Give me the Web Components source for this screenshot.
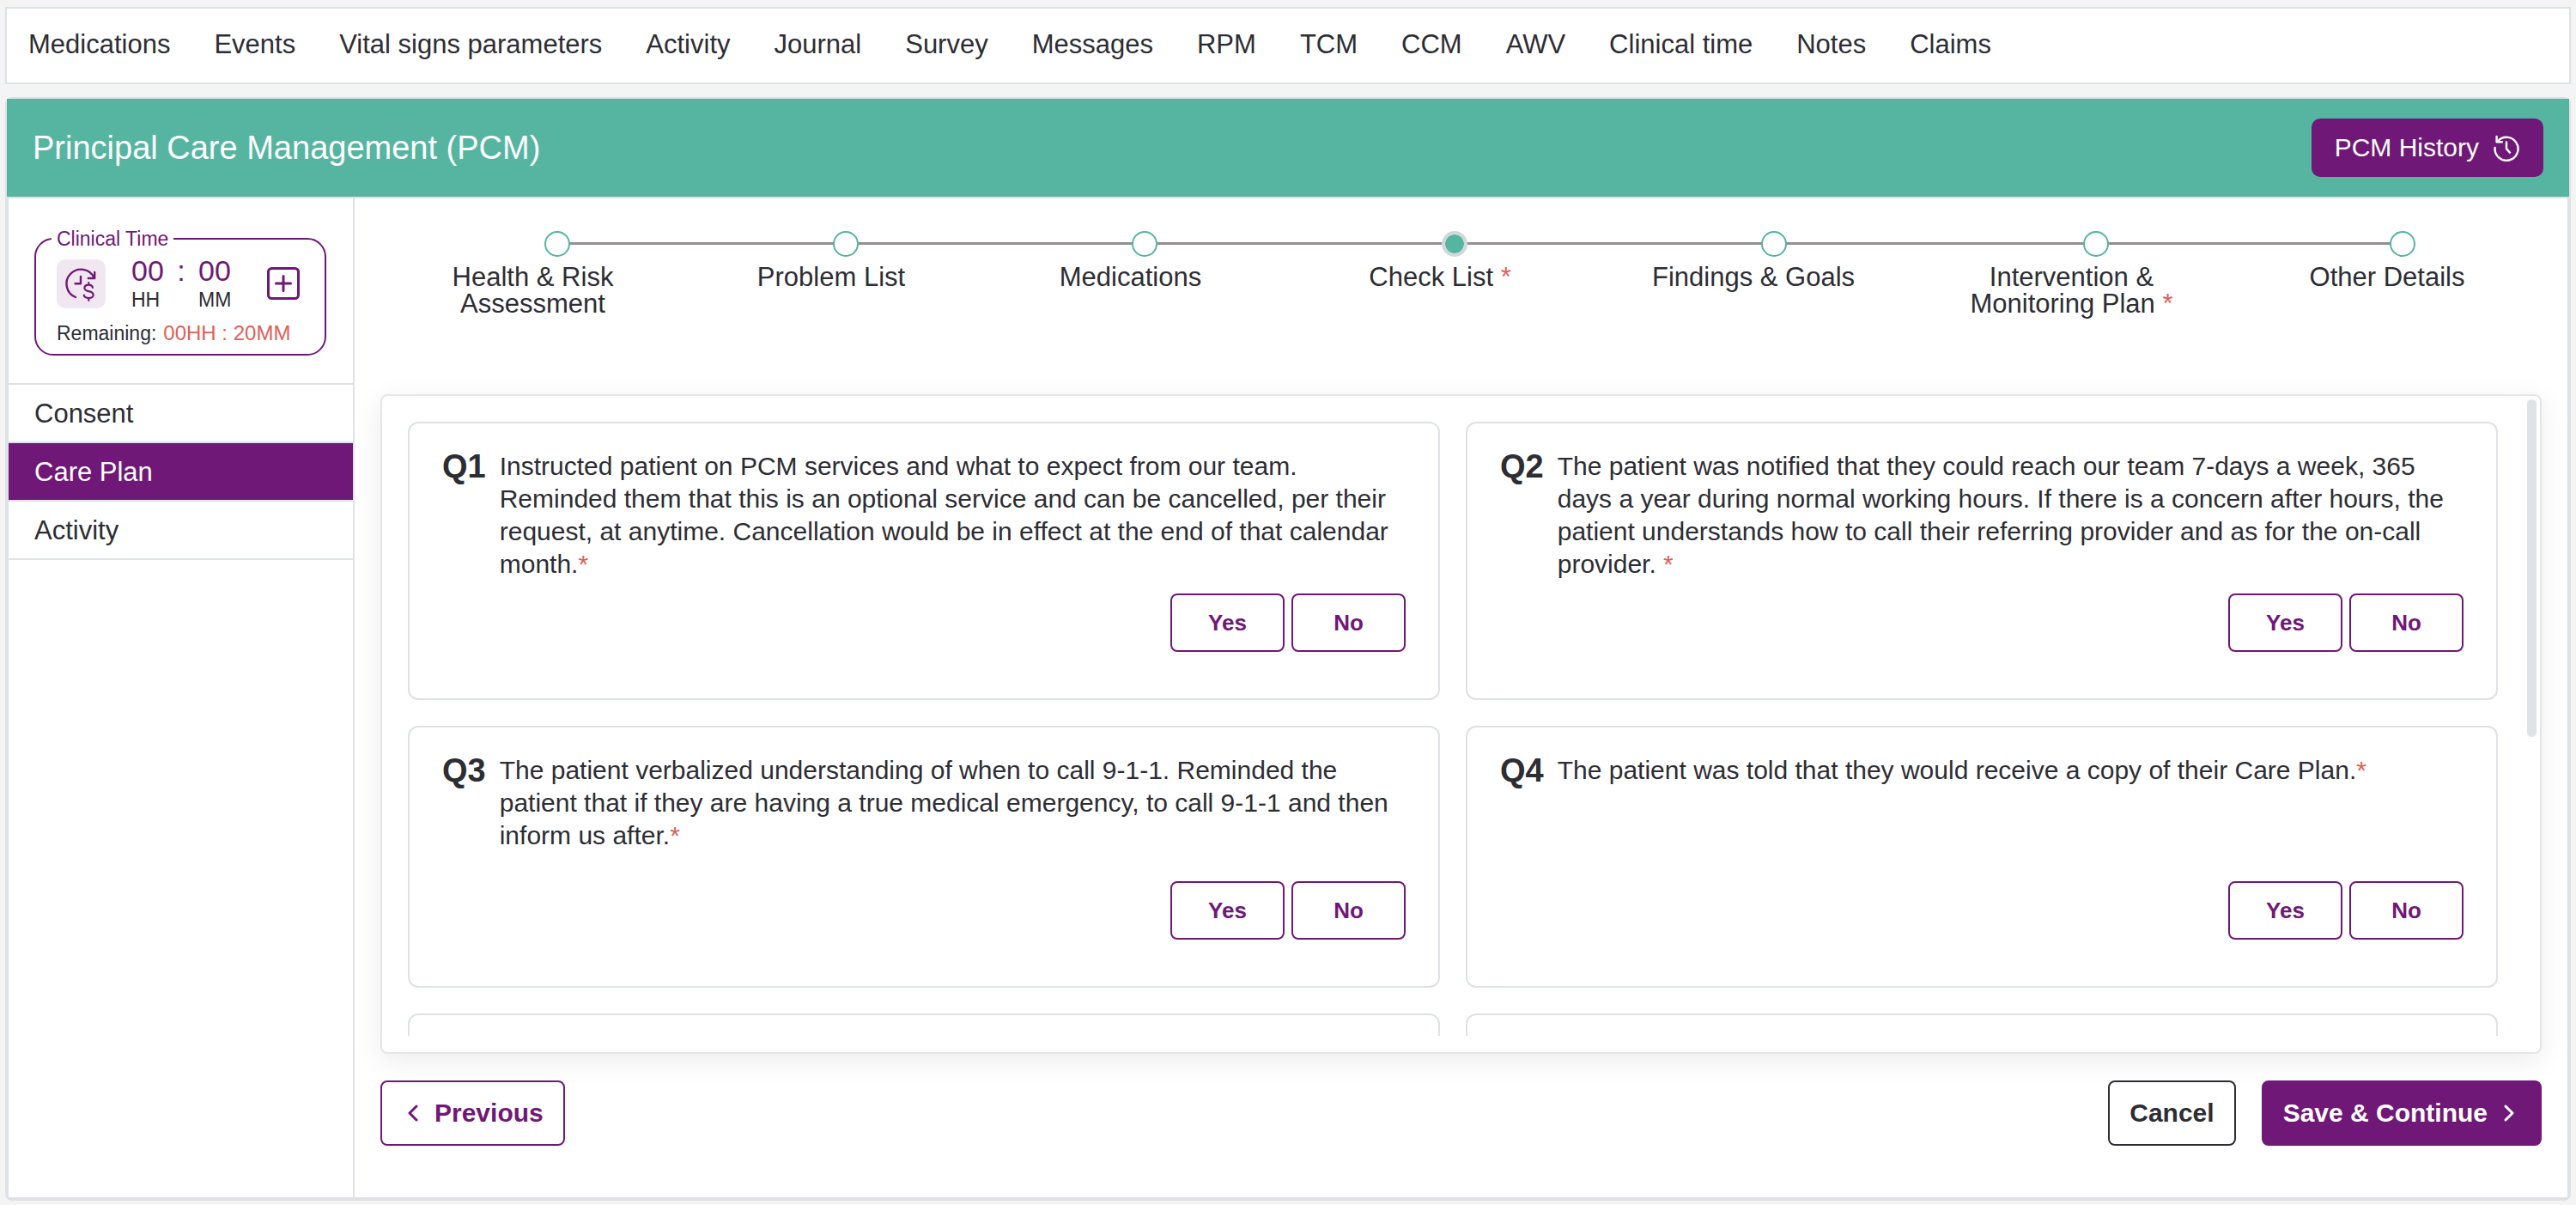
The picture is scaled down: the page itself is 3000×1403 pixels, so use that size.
<!DOCTYPE html>
<html lang="en">
<head>
<meta charset="utf-8">
<title>Principal Care Management (PCM)</title>
<style>
  :root {
    --purple: #6f1877;
    --teal: #55b5a1;
    --ink: #2d2d34;
    --line: #dee2e6;
    --red: #de6158;
  }

  body {
    margin: 0;
    background: #f4f4f4;
    color: var(--ink);
    font-family: "Liberation Sans", Arial, Helvetica, sans-serif;
    font-size: 31px;
  }
</style>
</head>
<body>
<pcm-page></pcm-page>

<script>
const define = (name, html, setup) => {
  const templateElement = document.createElement("template");
  templateElement.innerHTML = html;

  customElements.define(name, class extends HTMLElement {
    constructor() {
      super();
      this.attachShadow({ mode: "open" });
      this.shadowRoot.appendChild(templateElement.content.cloneNode(true));
    }

    connectedCallback() {
      if (setup) setup(this, this.shadowRoot);
    }
  });
};

/* nav-tabs: the bar with the patient sections */
define("nav-tabs", `
<style>
  :host { display: block; }
  nav {
    display: flex;
    flex-wrap: wrap;
    gap: 8px 51px;
    padding: 24px 25px 26px;
    background: #fff;
    border: 2px solid var(--line);
  }
  a { color: inherit; text-decoration: none; line-height: 36px; }
</style>
<nav aria-label="Patient sections">
  <a href="#">Medications</a>
  <a href="#">Events</a>
  <a href="#">Vital signs parameters</a>
  <a href="#">Activity</a>
  <a href="#">Journal</a>
  <a href="#">Survey</a>
  <a href="#">Messages</a>
  <a href="#">RPM</a>
  <a href="#">TCM</a>
  <a href="#">CCM</a>
  <a href="#">AWV</a>
  <a href="#">Clinical time</a>
  <a href="#">Notes</a>
  <a href="#">Claims</a>
</nav>
`);

/* page-header: green title bar, the slot holds the title */
define("page-header", `
<style>
  :host {
    display: flex;
    align-items: center;
    justify-content: space-between;
    padding: 23px 30px;
    background: var(--teal);
    color: #fff;
  }
  h1 { margin: 0; font-size: 38px; font-weight: 400; line-height: 44px; }
  button {
    display: flex;
    align-items: center;
    gap: 16px;
    height: 68px;
    padding: 0 27px;
    border: 0;
    border-radius: 10px;
    background: var(--purple);
    color: #fff;
    font: inherit;
    font-size: 30px;
  }
  svg { display: block; width: 32px; height: 32px; }
</style>
<h1><slot></slot></h1>
<button type="button">
  PCM History
  <svg viewBox="0 0 32 32" fill="none" stroke="#fff" stroke-width="2.4" stroke-linecap="round" stroke-linejoin="round" aria-hidden="true">
    <path d="M2.6 16A13.5 13.5 0 1 0 6 8.3"/>
    <path d="M4.6 3v6.2h6.2"/>
    <path d="M16 9.5v7.6l4 4.6"/>
  </svg>
</button>
`);

/* clinical-time: logged time box in the side bar */
define("clinical-time", `
<style>
  :host { display: block; font-size: 23px; line-height: 26px; }
  fieldset {
    min-width: 0;
    margin: 0;
    padding: 6px 18px 10px;
    border: 2px solid var(--purple);
    border-radius: 22px;
  }
  legend { padding: 0 6px; color: var(--purple); line-height: 28px; }
  .row { display: flex; align-items: center; padding: 0 11px 0 6px; }
  .badge { width: 57px; height: 57px; border-radius: 10px; background: #f1e7f1; }
  .time {
    display: grid;
    grid-template-columns: 38px 40px 38px;
    row-gap: 4px;
    margin: 0 auto 0 30px;
  }
  .num { color: var(--purple); font-size: 34px; line-height: 34px; }
  .colon { text-align: center; }
  button { padding: 0; border: 0; background: none; }
  svg { display: block; }
  .left { display: flex; align-items: baseline; gap: 8px; margin-top: 12px; padding-left: 6px; line-height: 28px; }
  .left strong { color: var(--red); font-size: 24px; font-weight: 400; }
</style>
<fieldset>
  <legend>Clinical Time</legend>
  <div class="row">
    <svg class="badge" viewBox="0 0 57 57" fill="none" stroke="var(--purple)" stroke-width="2.4" stroke-linecap="round" stroke-linejoin="round" aria-hidden="true">
      <path d="M22 44A16.8 16.8 0 1 1 43.6 21.5"/>
      <path d="M44.2 15v7h-7.4"/>
      <path d="M28 20v8.2h-6.4"/>
      <path stroke-width="2.1" d="M42 33c-.4-2.2-2.2-3.4-4.7-3.4-2.9 0-4.9 1.4-4.9 3.6 0 2.6 2.1 3.3 4.9 3.9 3.3.7 5.4 1.6 5.4 4.2 0 2.4-2.3 3.7-5.4 3.7-3 0-5.1-1.2-5.6-3.5M37.3 27v2.5M37.3 45v3"/>
    </svg>
    <div class="time">
      <span class="num">00</span><span class="num colon">:</span><span class="num">00</span>
      <span>HH</span><span></span><span>MM</span>
    </div>
    <button type="button" aria-label="Add time">
      <svg width="38" height="38" viewBox="0 0 38 38" fill="none" stroke="var(--purple)" stroke-width="3" stroke-linecap="round" aria-hidden="true">
        <rect x="1.5" y="1.5" width="35" height="35" rx="4"/>
        <path d="M19 10.5v17M10.5 19h17"/>
      </svg>
    </button>
  </div>
  <div class="left"><span>Remaining:</span><strong>00HH : 20MM</strong></div>
</fieldset>
`);

/* side-bar: clinical time and the section menu */
define("side-bar", `
<style>
  :host { display: block; box-sizing: border-box; border-right: 2px solid var(--line); }
  .top { padding: 33px 31px 32px 30px; }
  nav { display: flex; flex-direction: column; border-top: 2px solid var(--line); }
  a {
    padding: 16px 30px 14px;
    border-bottom: 2px solid var(--line);
    color: inherit;
    line-height: 36px;
    text-decoration: none;
  }
  a[aria-current] { background: var(--purple); color: #fff; }
</style>
<div class="top"><clinical-time></clinical-time></div>
<nav aria-label="PCM sections">
  <a href="#">Consent</a>
  <a href="#" aria-current="page">Care Plan</a>
  <a href="#">Activity</a>
</nav>
`);

/*
step-item

atributos:
- active: paso actual
- required: muestra el asterisco
*/
define("step-item", `
<style>
  :host { display: flex; justify-content: center; }
  .dot {
    box-sizing: border-box;
    width: 30px;
    height: 30px;
    margin-left: calc(60% - 15px);
    border: 2px solid var(--teal);
    border-radius: 50%;
    background: #fff;
  }
  :host([active]) .dot { border: 4px solid #d1d8d9; background: var(--teal); background-clip: padding-box; }
  .label { max-width: 280px; margin-top: 8px; line-height: 31px; text-align: center; }
  .star { color: var(--red); }
  :host(:not([required])) .star { display: none; }
</style>
<div>
  <div class="dot"></div>
  <div class="label"><slot></slot><span class="star"> *</span></div>
</div>
`);

/* step-bar: the steps lie over one track line, in the same grid cell */
define("step-bar", `
<style>
  :host { display: grid; align-items: start; }
  .track, .steps { grid-area: 1 / 1; }
  .track {
    height: 3px;
    margin: 13px 161px 0 206px;
    background: #929090;
  }
  .steps {
    display: grid;
    grid-template-columns: 355fr 340fr 357fr 364fr 366fr 375fr 360fr;
  }
</style>
<div class="track"></div>
<div class="steps"><slot></slot></div>
`);

define("outline-card", `
<style>
  :host {
    display: block;
    padding: 31px 38px 54px;
    border: 2px solid var(--line);
    border-radius: 12px;
    background: #fff;
  }
</style>
<slot></slot>
`);

/*
question-card

atributos:
- number: etiqueta de la pregunta
*/
define("question-card", `
<style>
  :host { display: grid; }
  .question { display: flex; gap: 16px; min-height: 133px; line-height: 38px; }
  .number { font-size: 38px; font-weight: 700; }
  p { margin: 0; font-size: 30px; }
  .star { color: var(--red); }
  .answers { display: flex; justify-content: flex-end; gap: 8px; margin-top: 15px; }
  button {
    width: 133px;
    height: 68px;
    border: 2px solid var(--purple);
    border-radius: 8px;
    background: #fff;
    color: var(--purple);
    font: inherit;
    font-size: 26px;
    font-weight: 700;
  }
</style>
<outline-card>
  <div class="question">
    <span class="number"></span>
    <p><slot></slot><span class="star">*</span></p>
  </div>
  <div class="answers">
    <button type="button">Yes</button>
    <button type="button">No</button>
  </div>
</outline-card>
`, (host, root) => {
  root.querySelector(".number").textContent = host.getAttribute("number");
});

define("scroll-panel", `
<style>
  :host {
    display: flex;
    box-sizing: border-box;
    min-height: 0;
    padding: 4px 4px 19px 0;
    border: 2px solid #e6e6e6;
    border-radius: 8px;
    background: #fff;
    box-shadow: 0 8px 32px rgba(0, 0, 0, .08);
  }
  .view { flex: 1; overflow-y: auto; scrollbar-width: none; }
  .grid {
    display: grid;
    grid-template-columns: 1fr 1fr;
    gap: 30px;
    padding: 26px 34px 26px 30px;
  }
  .thumb { width: 11px; height: 53%; border-radius: 6px; background: #dfe3e8; }
</style>
<div class="view"><div class="grid"><slot></slot></div></div>
<div class="thumb"></div>
`);

/*
form-button

atributos:
- kind: outline | dark | solid
- icon: prev | next
*/
define("form-button", `
<style>
  :host { display: block; }
  button {
    display: flex;
    align-items: center;
    gap: 19px;
    height: 76px;
    padding: 0 23px;
    border: 2px solid var(--purple);
    border-radius: 8px;
    background: #fff;
    color: var(--purple);
    font: inherit;
    font-size: 30px;
    font-weight: 700;
  }
  :host([kind="dark"]) button { border-color: var(--ink); color: var(--ink); }
  :host([kind="solid"]) button { background: var(--purple); color: #fff; }
  :host([icon="prev"]) button { padding-left: 30px; }
  :host([icon="next"]) button { padding-right: 30px; }
  svg { display: none; width: 12px; height: 20px; fill: none; stroke: currentColor; stroke-width: 3; stroke-linecap: round; stroke-linejoin: round; }
  :host([icon="prev"]) .prev, :host([icon="next"]) .next { display: block; }
</style>
<button type="button">
  <svg class="prev" viewBox="0 0 12 20" aria-hidden="true"><path d="M10 2 2 10l8 8"/></svg>
  <span><slot></slot></span>
  <svg class="next" viewBox="0 0 12 20" aria-hidden="true"><path d="m2 2 8 8-8 8"/></svg>
</button>
`);

/* care-plan: steps, questions and the actions under them */
define("care-plan", `
<style>
  :host {
    display: flex;
    flex-direction: column;
    box-sizing: border-box;
    min-width: 0;
    min-height: 0;
    padding: 38px 30px 60px;
  }
  step-bar { min-height: 190px; }
  scroll-panel { flex: 1; }
  .actions { display: flex; gap: 30px; margin-top: 31px; }
  .actions :first-child { margin-right: auto; }
</style>
<step-bar>
  <step-item>Health &amp; Risk Assessment</step-item>
  <step-item>Problem List</step-item>
  <step-item>Medications</step-item>
  <step-item active required>Check List</step-item>
  <step-item>Findings &amp; Goals</step-item>
  <step-item required>Intervention &amp; Monitoring Plan</step-item>
  <step-item>Other Details</step-item>
</step-bar>
<scroll-panel>
  <question-card number="Q1">Instructed patient on PCM services and what to expect from our team. Reminded them that this is an optional service and can be cancelled, per their request, at anytime. Cancellation would be in effect at the end of that calendar month.</question-card>
  <question-card number="Q2">The patient was notified that they could reach our team 7-days a week, 365 days a year during normal working hours. If there is a concern after hours, the patient understands how to call their referring provider and as for the on-call provider. </question-card>
  <question-card number="Q3">The patient verbalized understanding of when to call 9-1-1. Reminded the patient that if they are having a true medical emergency, to call 9-1-1 and then inform us after.</question-card>
  <question-card number="Q4">The patient was told that they would receive a copy of their Care Plan.</question-card>
  <outline-card></outline-card>
  <outline-card></outline-card>
</scroll-panel>
<div class="actions">
  <form-button kind="outline" icon="prev">Previous</form-button>
  <form-button kind="dark">Cancel</form-button>
  <form-button kind="solid" icon="next">Save &amp; Continue</form-button>
</div>
`);

define("pcm-page", `
<style>
  :host {
    display: flex;
    flex-direction: column;
    gap: 15px;
    box-sizing: border-box;
    height: 100vh;
    padding: 8px 6px 5px;
  }
  main {
    display: flex;
    flex: 1;
    flex-direction: column;
    min-height: 0;
    border: 2px solid var(--line);
    border-radius: 8px;
    background: #fff;
  }
  .body {
    display: grid;
    flex: 1;
    grid-template-columns: 403px 1fr;
    grid-template-rows: minmax(0, 1fr);
    min-height: 0;
    border: 2px solid var(--line);
  }
</style>
<nav-tabs></nav-tabs>
<main>
  <page-header>Principal Care Management (PCM)</page-header>
  <div class="body">
    <side-bar></side-bar>
    <care-plan></care-plan>
  </div>
</main>
`);
</script>
</body>
</html>
